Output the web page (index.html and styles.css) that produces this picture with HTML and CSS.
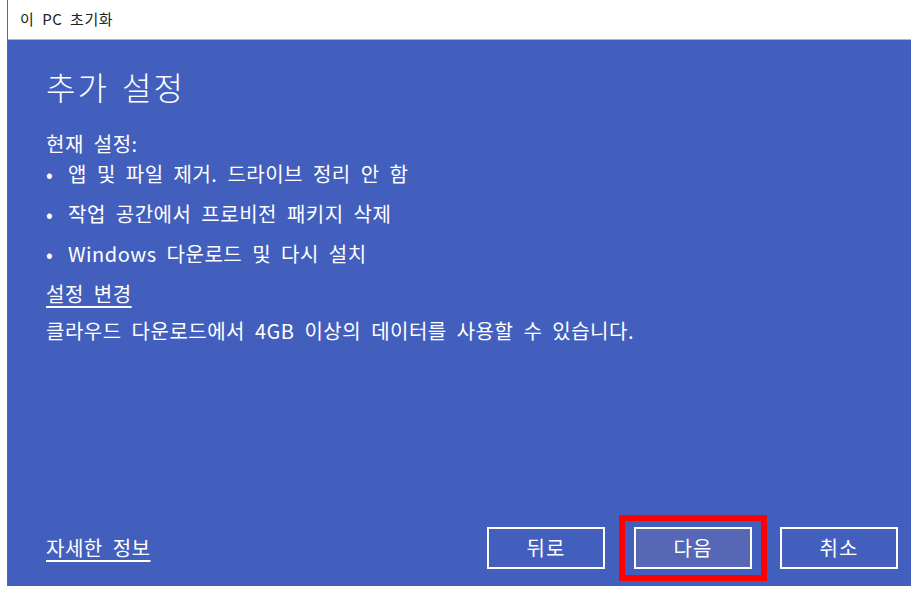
FILE: index.html
```html
<!DOCTYPE html>
<html>
<head>
  <title>이 PC 초기화</title>
  <link rel="stylesheet" href="styles.css">
</head>
<body>
  <div class="window">
    <div class="titlebar">이 PC 초기화</div>
    <div class="panel">
      <div class="content">
        <h1>추가 설정</h1>
        <p class="label">현재 설정:</p>
        <ul class="settings">
          <li>앱 및 파일 제거. 드라이브 정리 안 함</li>
          <li>작업 공간에서 프로비전 패키지 삭제</li>
          <li>Windows 다운로드 및 다시 설치</li>
        </ul>
        <p class="change"><a class="link" href="#">설정 변경</a></p>
        <p class="note">클라우드 다운로드에서 4GB 이상의 데이터를 사용할 수 있습니다.</p>
      </div>
      <div class="footer">
        <a class="link" href="#">자세한 정보</a>
        <div class="buttons">
          <button class="btn">뒤로</button>
          <span class="highlight"><button class="btn primary">다음</button></span>
          <button class="btn">취소</button>
        </div>
      </div>
    </div>
  </div>
</body>
</html>
```

FILE: styles.css
```css
/* CSS */
body {
  margin: 0;
  padding: 0;
  background-color: #fff;
  font-family: "Noto Sans CJK KR", "Noto Sans", sans-serif;
}

.window {
  margin-left: 7px;
  width: 903px;
  height: 586px;
  border-left: 1px solid #6a6a6a;
  display: flex;
  flex-direction: column;
}

.titlebar {
  height: 39px;
  line-height: 38px;
  padding-left: 12px;
  font-size: 15px;
  letter-spacing: 0.5px;
  word-spacing: 4px;
  color: #222;
  background-color: #fff;
  border-bottom: 1px solid #a8b3dc;
}

.panel {
  flex: 1;
  background-color: #435fbe;
  color: #fff;
  display: flex;
  flex-direction: column;
  justify-content: space-between;
  padding: 0 13px 0 38px;
  font-size: 20px;
  letter-spacing: 0.5px;
  word-spacing: 5px;
}

h1 {
  font-size: 32px;
  font-weight: 300;
  letter-spacing: 2px;
  word-spacing: 4px;
  margin: 22px 0 0 0;
  line-height: 48px;
}

.label {
  margin: 24px 0 0 0;
  line-height: 20px;
}

.settings {
  list-style: none;
  margin: 0;
  padding: 0;
}

.settings li {
  line-height: 40px;
}

.settings li::before {
  content: "•";
  display: inline-block;
  width: 22px;
}

.change {
  margin: 0;
  line-height: 40px;
}

.link {
  color: #fff;
  text-decoration: underline;
  text-underline-offset: 4px;
  line-height: 34px;
}

.note {
  margin: 2px 0 0 0;
  line-height: 30px;
}

.footer {
  display: flex;
  justify-content: space-between;
  align-items: center;
  height: 75px;
  padding-bottom: 1px;
}

.buttons {
  display: flex;
  align-items: center;
}

.btn {
  width: 118px;
  height: 42px;
  background-color: transparent;
  border: 2px solid #fff;
  color: #fff;
  font-family: "Noto Sans CJK KR", "Noto Sans", sans-serif;
  font-size: 20px;
  letter-spacing: 1px;
  padding: 0;
}

.btn.primary {
  background-color: #5567b5;
  display: block;
}

.highlight {
  border: 6px solid #ff0000;
  padding: 6px 9px;
  margin: 0 13px 0 14px;
}
```
